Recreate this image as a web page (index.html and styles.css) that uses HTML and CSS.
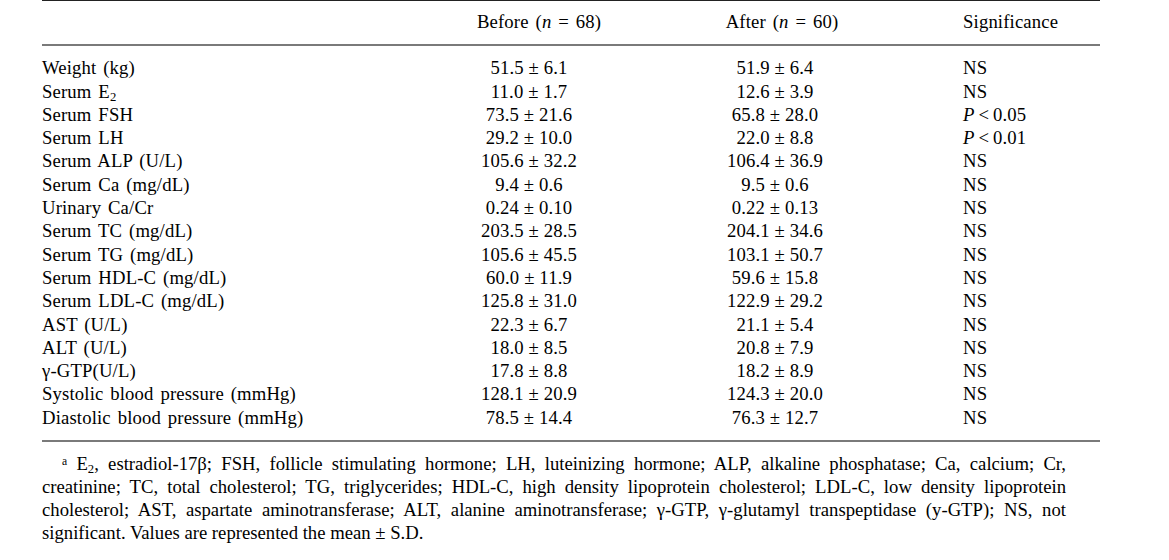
FILE: index.html
```html
<!DOCTYPE html>
<html>
<head>
<meta charset="utf-8">
<link rel="stylesheet" href="styles.css">
</head>
<body>
<div class="page">
<table class="tbl">
  <colgroup>
    <col class="w-lab"><col class="w-bef"><col class="w-aft"><col class="w-sig">
  </colgroup>
  <thead>
    <tr>
      <th class="lab"></th>
      <th class="bef">Before (<i>n</i> = 68)</th>
      <th class="aft">After (<i>n</i> = 60)</th>
      <th class="sig">Significance</th>
    </tr>
  </thead>
  <tbody>
    <tr class="first"><td>Weight (kg)</td><td class="num">51.5 ± 6.1</td><td class="num">51.9 ± 6.4</td><td class="sig">NS</td></tr>
    <tr><td>Serum E<sub>2</sub></td><td class="num">11.0 ± 1.7</td><td class="num">12.6 ± 3.9</td><td class="sig">NS</td></tr>
    <tr><td>Serum FSH</td><td class="num">73.5 ± 21.6</td><td class="num">65.8 ± 28.0</td><td class="sig"><i>P</i>&thinsp;&lt;&thinsp;0.05</td></tr>
    <tr><td>Serum LH</td><td class="num">29.2 ± 10.0</td><td class="num">22.0 ± 8.8</td><td class="sig"><i>P</i>&thinsp;&lt;&thinsp;0.01</td></tr>
    <tr><td>Serum ALP (U/L)</td><td class="num">105.6 ± 32.2</td><td class="num">106.4 ± 36.9</td><td class="sig">NS</td></tr>
    <tr><td>Serum Ca (mg/dL)</td><td class="num">9.4 ± 0.6</td><td class="num">9.5 ± 0.6</td><td class="sig">NS</td></tr>
    <tr><td>Urinary Ca/Cr</td><td class="num">0.24 ± 0.10</td><td class="num">0.22 ± 0.13</td><td class="sig">NS</td></tr>
    <tr><td>Serum TC (mg/dL)</td><td class="num">203.5 ± 28.5</td><td class="num">204.1 ± 34.6</td><td class="sig">NS</td></tr>
    <tr><td>Serum TG (mg/dL)</td><td class="num">105.6 ± 45.5</td><td class="num">103.1 ± 50.7</td><td class="sig">NS</td></tr>
    <tr><td>Serum HDL-C (mg/dL)</td><td class="num">60.0 ± 11.9</td><td class="num">59.6 ± 15.8</td><td class="sig">NS</td></tr>
    <tr><td>Serum LDL-C (mg/dL)</td><td class="num">125.8 ± 31.0</td><td class="num">122.9 ± 29.2</td><td class="sig">NS</td></tr>
    <tr><td>AST (U/L)</td><td class="num">22.3 ± 6.7</td><td class="num">21.1 ± 5.4</td><td class="sig">NS</td></tr>
    <tr><td>ALT (U/L)</td><td class="num">18.0 ± 8.5</td><td class="num">20.8 ± 7.9</td><td class="sig">NS</td></tr>
    <tr><td>γ-GTP(U/L)</td><td class="num">17.8 ± 8.8</td><td class="num">18.2 ± 8.9</td><td class="sig">NS</td></tr>
    <tr><td>Systolic blood pressure (mmHg)</td><td class="num">128.1 ± 20.9</td><td class="num">124.3 ± 20.0</td><td class="sig">NS</td></tr>
    <tr class="last"><td>Diastolic blood pressure (mmHg)</td><td class="num">78.5 ± 14.4</td><td class="num">76.3 ± 12.7</td><td class="sig">NS</td></tr>
  </tbody>
</table>
<div class="foot">
  <span class="line first-line"><sup>a</sup> E<sub>2</sub>, estradiol-17β; FSH, follicle stimulating hormone; LH, luteinizing hormone; ALP, alkaline phosphatase; Ca, calcium; Cr,</span>
  <span class="line">creatinine; TC, total cholesterol; TG, triglycerides; HDL-C, high density lipoprotein cholesterol; LDL-C, low density lipoprotein</span>
  <span class="line">cholesterol; AST, aspartate aminotransferase; ALT, alanine aminotransferase; γ-GTP, γ-glutamyl transpeptidase (y-GTP); NS, not</span>
  <span class="line end">significant. Values are represented the mean ± S.D.</span>
</div>
</div>
</body>
</html>
```

FILE: styles.css
```css
html, body {
  margin: 0;
  padding: 0;
  background: #ffffff;
}
body {
  font-family: "Liberation Serif", "Times New Roman", serif;
  font-size: 18.7px;
  color: #000;
}
.page {
  padding-left: 42px;
  width: 1058px;
}
.tbl {
  width: 1058px;
  border-collapse: collapse;
  table-layout: fixed;
  letter-spacing: 0.15px;
  word-spacing: 2px;
}
.w-lab { width: 387px; }
.w-bef { width: 200px; }
.w-aft { width: 292px; }
.w-sig { width: 179px; }

.tbl th, .tbl td {
  padding: 0;
  line-height: 23.3px;
  font-weight: normal;
  white-space: nowrap;
  vertical-align: top;
}
.tbl thead tr {
  border-top: 1px solid #222;
  border-bottom: 2px solid #7a7a7a;
}
.tbl thead th {
  padding-top: 9px;
  padding-bottom: 11px;
}
.tbl th.bef { text-align: center; padding-left: 20px; }
.tbl th.aft { text-align: center; padding-left: 14px; }
.tbl .sig { text-align: left; padding-left: 42px; }
.tbl td.num { text-align: center; word-spacing: 0; }
.tbl tr.first td { padding-top: 10px; }
.tbl tr.last td { padding-bottom: 11px; }
.tbl tbody tr.last { border-bottom: 2px solid #7a7a7a; }

sub {
  font-size: 0.68em;
  vertical-align: -0.25em;
  line-height: 0;
}
sup {
  font-size: 0.62em;
  vertical-align: 0.45em;
  line-height: 0;
}

.foot {
  width: 1024px;
  padding-top: 10px;
  line-height: 23px;
}
.foot .line {
  display: block;
  text-align: justify;
  text-align-last: justify;
}
.foot .first-line {
  text-indent: 20px;
}
.foot .end {
  text-align-last: left;
}
```
